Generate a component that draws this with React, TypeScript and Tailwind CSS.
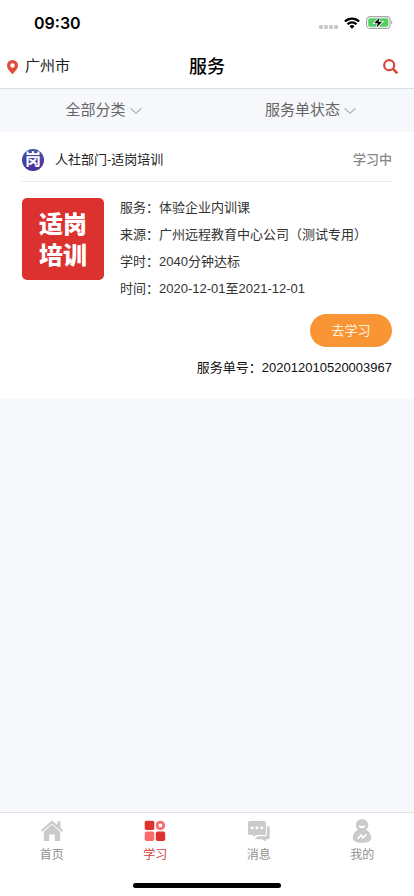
import { useState } from 'react';
import type { ReactNode } from 'react';

type TabKey = 'home' | 'study' | 'message' | 'mine';

const order = {
  department: '人社部门-适岗培训',
  status: '学习中',
  cover: ['适岗', '培训'],
  fields: [
    { label: '服务', value: '体验企业内训课' },
    { label: '来源', value: '广州远程教育中心公司（测试专用）' },
    { label: '学时', value: '2040分钟达标' },
    { label: '时间', value: '2020-12-01至2021-12-01' },
  ],
  no: '202012010520003967',
};

function HomeIcon() {
  return (
    <svg width="24" height="24" viewBox="0 0 24 24" fill="#cbc9ca" aria-hidden>
      <path d="M12 1.4 .8 11.2l1.4 1.6L12 4.4l9.8 8.4 1.4-1.6-2.8-2.5V2.2h-3v3.9z" />
      <path d="M12 5.6 3.8 12.7V22h5.4v-6.6h5.6V22h5.4v-9.300z" />
    </svg>
  );
}

function StudyIcon() {
  return (
    <svg width="24" height="24" viewBox="0 0 24 24" aria-hidden>
      <rect x="1.7" y="1.7" width="9.6" height="9.4" rx="1.8" fill="#da3330" />
      <circle cx="17.4" cy="6.4" r="3.3" fill="none" stroke="#f86e6b" strokeWidth="2.8" />
      <rect x="1.7" y="12.6" width="9.6" height="9.4" rx="1.8" fill="#f86e6b" />
      <rect x="12.8" y="12.6" width="9.4" height="9.4" rx="1.8" fill="#da3330" />
    </svg>
  );
}

function MessageIcon() {
  return (
    <svg width="24" height="24" viewBox="0 0 24 24" fill="#cbc9ca" aria-hidden>
      <path d="M2.6 2h14.6a1.6 1.6 0 0 1 1.6 1.6v10.8a1.6 1.6 0 0 1-1.6 1.6H9.4l-3 2v-2H2.6A1.6 1.6 0 0 1 1 14.4V3.6A1.6 1.6 0 0 1 2.6 2z" />
      <path d="M19.8 7.200h1.600a1.300 1.300 0 0 1 1.300 1.300v10.300a1.400 1.400 0 0 1-1.400 1.400h-2.300v2.300l-4-2.300H7.600l3.200-3h7.400a1.600 1.600 0 0 0 1.600-1.600z" />
      <g fill="#fff">
        <circle cx="5" cy="8.8" r="1.5" />
        <circle cx="9.9" cy="8.8" r="1.5" />
        <circle cx="14.8" cy="8.8" r="1.5" />
      </g>
    </svg>
  );
}

function MineIcon() {
  return (
    <svg width="24" height="24" viewBox="0 0 24 24" aria-hidden>
      <path
        d="M12 0a6.2 6.2 0 0 1 6.2 6.2c0 1.9-.8 3.5-2.1 4.7 3.1 1.4 5.1 4.2 5.1 7.6 0 3.9-2.7 5.2-9.2 5.2s-9.2-1.3-9.2-5.2c0-3.4 2-6.2 5.1-7.6a6.3 6.3 0 0 1-2.1-4.700A6.200 6.200 0 0 1 12 0z"
        fill="#cbc9ca"
      />
      <path d="M8.8 6.2q3.2 1.4 6.4 0a3.2 2.9 0 0 1-6.4 0z" fill="#fff" />
      <path d="m7.6 19.8 3.6-3.6 1.6 2.6 3.8-3.4" fill="none" stroke="#fff" strokeWidth="1.7" />
    </svg>
  );
}

function Chevron() {
  return (
    <svg width="12" height="8" viewBox="0 0 12 8" fill="none" stroke="#b9bbbe" strokeWidth="1.4" aria-hidden>
      <path d="m.6 1.3 5.400 5 5.400-5" />
    </svg>
  );
}

function StatusBar() {
  return (
    <div className="flex h-[45px] items-center justify-between pl-[34px] pr-[21px]">
      <span className="font-['Inter','Liberation_Sans',sans-serif] text-base font-semibold text-black">09:30</span>
      <div className="flex items-center gap-[6px]">
        <svg width="19" height="12" viewBox="0 0 19 12" fill="#c9c9c9" aria-hidden>
          <rect x="0" y="8" width="4" height="4" rx="1.2" />
          <rect x="5" y="8" width="4" height="4" rx="1.2" />
          <rect x="10" y="8" width="4" height="4" rx="1.2" />
          <rect x="15" y="8" width="4" height="4" rx="1.2" />
        </svg>
        <svg width="16" height="12" viewBox="0 0 16 12" aria-hidden>
          <g fill="none" stroke="#000" strokeWidth="2.2">
            <path d="M.9 4.5a10.2 10.2 0 0 1 14.2 0" />
            <path d="M3.5 7.3a6.4 6.4 0 0 1 9 0" />
          </g>
          <path d="M8 11.7 5.5 9.2a3.6 3.6 0 0 1 5 0z" />
        </svg>
        <svg width="27" height="13" viewBox="0 0 27 13" aria-hidden>
          <rect x=".6" y=".6" width="23.4" height="11.8" rx="3.4" fill="#fff" stroke="#a5a5a5" strokeWidth="1.1" />
          <rect x="2.2" y="2.2" width="20.2" height="8.6" rx="1.8" fill="#55cf65" />
          <path d="M25.2 4.5c1.5.6 1.5 3.4 0 4z" fill="#a5a5a5" />
          <path
            d="M13.6 1.6 8.2 7.3h3.6l-1.2 4.3 5.6-5.8h-3.7z"
            fill="#000"
            stroke="#fff"
            strokeWidth="1.6"
            paintOrder="stroke"
          />
        </svg>
      </div>
    </div>
  );
}

const tabs: { key: TabKey; label: string; icon: ReactNode }[] = [
  { key: 'home', label: '首页', icon: <HomeIcon /> },
  { key: 'study', label: '学习', icon: <StudyIcon /> },
  { key: 'message', label: '消息', icon: <MessageIcon /> },
  { key: 'mine', label: '我的', icon: <MineIcon /> },
];

export default function App() {
  const [tab, setTab] = useState<TabKey>('study');

  return (
    <div className="flex min-h-screen flex-col bg-[#f6f8fb] font-['Liberation_Sans','Noto_Sans_CJK_SC',sans-serif] text-[#333]">
      <header className="border-b border-[#dcdfe6] bg-white">
        <StatusBar />
        <div className="grid h-[43px] grid-cols-[1fr_auto_1fr] items-center px-[6px]">
          <button type="button" className="flex items-center gap-[6px] justify-self-start text-[15px] text-[#222]">
            <svg width="13" height="16" viewBox="0 0 13 16" aria-hidden>
              <path
                d="M6.5 1A5.5 5.5 0 0 0 1 6.5C1 10 4.3 12.4 6.5 15.4 8.7 12.4 12 10 12 6.5A5.5 5.5 0 0 0 6.5 1zm0 3.3a2.2 2.2 0 1 1 0 4.4 2.2 2.2 0 0 1 0-4.400z"
                fill="#df4f3c"
                fillRule="evenodd"
              />
            </svg>
            广州市
          </button>
          <h1 className="text-center text-lg font-medium text-black">服务</h1>
          <button type="button" aria-label="搜索" className="justify-self-end pr-[10px]">
            <svg width="15" height="15" viewBox="0 0 15 15" fill="none" stroke="#dc4638" aria-hidden>
              <circle cx="6.2" cy="6.2" r="5" strokeWidth="2.2" />
              <path d="m9.9 9.9 4.4 4.3" strokeWidth="2.6" />
            </svg>
          </button>
        </div>
      </header>

      <div className="grid h-[43px] grid-cols-2 text-[15px] text-[#666]">
        <button type="button" className="flex items-center justify-center gap-1">
          全部分类
          <Chevron />
        </button>
        <button type="button" className="flex items-center justify-center gap-1">
          服务单状态
          <Chevron />
        </button>
      </div>

      <main className="flex-1">
        <article className="bg-white px-[22px] pt-4 pb-5 text-[13px]">
          <div className="flex items-center border-b border-[#ececec] pb-[9px]">
            <span className="flex size-[22px] items-center justify-center rounded-full bg-linear-to-b from-[#3b55a4] to-[#4f2d9a] text-base font-bold text-white">
              岗
            </span>
            <h2 className="ml-[11px] flex-1 leading-6 text-[#222]">{order.department}</h2>
            <span className="font-medium leading-6 text-[#888]">{order.status}</span>
          </div>

          <div className="flex gap-4 pt-3">
            <div className="mt-1 flex size-[82px] shrink-0 flex-col items-center justify-center rounded-[5px] bg-[#dc322f] pt-px text-2xl font-black leading-[31px] text-white">
              {order.cover.map((line) => (
                <span key={line}>{line}</span>
              ))}
            </div>
            <ul className="min-w-0 flex-1 leading-[27px]">
              {order.fields.map(({ label, value }) => (
                <li key={label}>
                  {label}：{value}
                </li>
              ))}
            </ul>
          </div>

          <div className="flex flex-col items-end gap-[10px] pt-3">
            <button type="button" className="h-[33px] w-[82px] rounded-full bg-[#fa9536] text-[#fff3e0]">
              去学习
            </button>
            <p className="leading-[22px] text-[#111]">服务单号：{order.no}</p>
          </div>
        </article>
      </main>

      <nav className="border-t border-[#dfe1ea] bg-white">
        <div className="grid grid-cols-4 pt-[6px]">
          {tabs.map(({ key, label, icon }) => (
            <button
              key={key}
              type="button"
              onClick={() => setTab(key)}
              className={`flex flex-col items-center gap-[2px] text-xs leading-5 ${
                tab === key ? 'text-[#cf3f3d]' : 'text-[#8f8f8f]'
              }`}
            >
              {icon}
              {label}
            </button>
          ))}
        </div>
        <div className="mx-auto mt-[18px] mb-2 h-[5px] w-[148px] rounded-full bg-black" />
      </nav>
    </div>
  );
}
